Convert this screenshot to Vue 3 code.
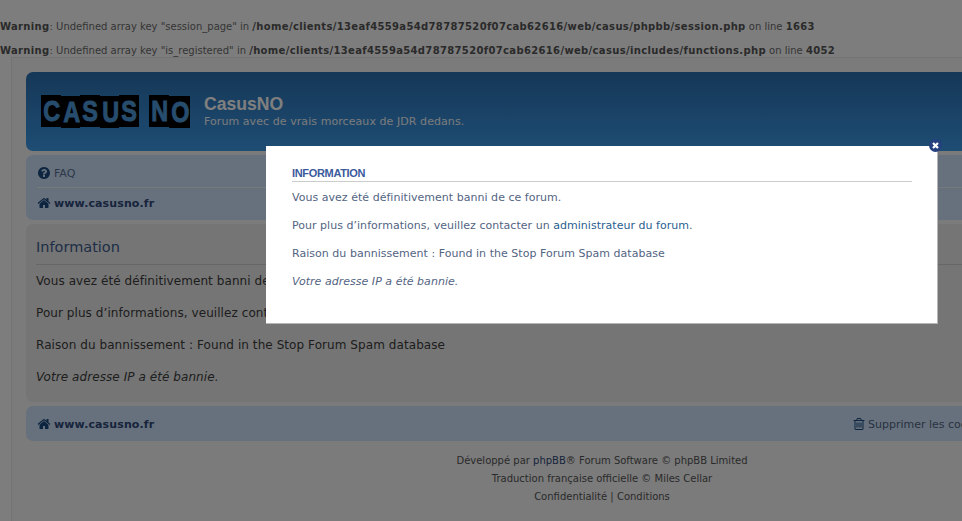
<script setup>
const logoWords = [['C','A','S','U','S'],['N','O']]
const warnings = [
  { key: 'session_page', path: '/home/clients/13eaf4559a54d78787520f07cab62616/web/casus/phpbb/session.php', line: 1663 },
  { key: 'is_registered', path: '/home/clients/13eaf4559a54d78787520f07cab62616/web/casus/includes/functions.php', line: 4052 }
]
const home = 'M1472 992v480q0 26-19 45t-45 19h-384v-384h-256v384h-384q-26 0-45-19t-19-45v-480q0-1 .5-3t.5-3l575-474 575 474q1 2 1 6zm223-69l-62 74q-8 9-21 11h-3q-13 0-21-7l-692-577-692 577q-12 8-24 7-13-2-21-11l-62-74q-8-10-7-23.5t11-21.5l719-599q32-26 76-26t76 26l244 204v-195q0-14 9-23t23-9h192q14 0 23 9t9 23v408l219 182q10 8 11 21.5t-7 23.5z'
const help = 'M1024 1376v-192q0-14-9-23t-23-9h-192q-14 0-23 9t-9 23v192q0 14 9 23t23 9h192q14 0 23-9t9-23zm256-672q0-88-55.5-163t-138.5-116-170-41q-243 0-371 213-15 24 8 42l132 100q7 6 19 6 16 0 25-12 53-68 86-92 34-24 86-24 48 0 85.5 26t37.5 59q0 38-20 61t-68 45q-63 28-115.5 86.5t-52.5 125.5v36q0 14 9 23t23 9h192q14 0 23-9t9-23q0-19 21.5-49.5t54.5-49.5q32-18 49-28.5t46-35 44.5-48 28-60.5 12.5-81zm384 192q0 209-103 385.5t-279.5 279.5-385.5 103-385.5-103-279.5-279.5-103-385.5 103-385.5 279.5-279.5 385.5-103 385.5 103 279.5 279.5 103 385.5z'
const trash = 'M704 736v576q0 14-9 23t-23 9h-64q-14 0-23-9t-9-23v-576q0-14 9-23t23-9h64q14 0 23 9t9 23zm256 0v576q0 14-9 23t-23 9h-64q-14 0-23-9t-9-23v-576q0-14 9-23t23-9h64q14 0 23 9t9 23zm256 0v576q0 14-9 23t-23 9h-64q-14 0-23-9t-9-23v-576q0-14 9-23t23-9h64q14 0 23 9t9 23zm128 724v-948h-896v948q0 22 7 40.5t14.5 27 10.5 8.5h832q3 0 10.5-8.5t14.5-27 7-40.5zm-672-1076h448l-48-117q-7-9-17-11h-317q-10 2-17 11zm928 32v64q0 14-9 23t-23 9h-96v948q0 83-47 143.5t-113 60.5h-832q-66 0-113-58.5t-47-141.5v-952h-96q-14 0-23-9t-9-23v-64q0-14 9-23t23-9h309l70-167q15-37 54-63t79-26h320q40 0 79 26t54 63l70 167h309q14 0 23 9t9 23z'
</script>

<template>
  <div class="page">
    <div class="warnings">
      <p v-for="w in warnings" :key="w.key"><b>Warning</b>: Undefined array key "{{ w.key }}" in <b>{{ w.path }}</b> on line <b>{{ w.line }}</b></p>
    </div>
    <div class="wrap">
      <header class="headerbar">
        <div class="logo">
          <span v-for="(word, i) in logoWords" :key="i" class="logo-word">
            <span v-for="(l, j) in word" :key="j" class="logo-letter"><span class="logo-glyph">{{ l }}</span></span>
          </span>
        </div>
        <div class="site">
          <h1>CasusNO</h1>
          <p>Forum avec de vrais morceaux de JDR dedans.</p>
        </div>
      </header>

      <nav class="navbar">
        <div class="nav-row nav-top">
          <svg class="ico" viewBox="0 0 1792 1792"><path :d="help" /></svg>
          <span>FAQ</span>
        </div>
        <div class="nav-row nav-crumb">
          <svg class="ico" viewBox="0 0 1792 1792"><path :d="home" /></svg>
          <b>www.casusno.fr</b>
        </div>
      </nav>

      <section class="panel">
        <h2>Information</h2>
        <p>Vous avez été définitivement banni de ce forum.</p>
        <p>Pour plus d’informations, veuillez contacter un administrateur du forum.</p>
        <p>Raison du bannissement : Found in the Stop Forum Spam database</p>
        <p><em>Votre adresse IP a été bannie.</em></p>
      </section>

      <nav class="navbar navbar-bottom">
        <div class="nav-row nav-crumb">
          <svg class="ico" viewBox="0 0 1792 1792"><path :d="home" /></svg>
          <b>www.casusno.fr</b>
        </div>
        <div class="nav-row nav-right">
          <svg class="ico" viewBox="0 0 1792 1792"><path :d="trash" /></svg>
          <span>Supprimer les cookies</span>
        </div>
      </nav>

      <footer class="copyright">
        <p>Développé par <span class="lnk">phpBB</span>® Forum Software © phpBB Limited</p>
        <p>Traduction française officielle © Miles Cellar</p>
        <p>Confidentialité | Conditions</p>
      </footer>
    </div>
  </div>

  <div class="overlay"></div>

  <div class="popup">
    <button class="close" type="button" aria-label="Fermer">
      <svg viewBox="0 0 11 11"><path d="M3 3l5 5M8 3L3 8" /></svg>
    </button>
    <h3>INFORMATION</h3>
    <p>Vous avez été définitivement banni de ce forum.</p>
    <p>Pour plus d’informations, veuillez contacter un <span class="lnk-blue">administrateur du forum</span>.</p>
    <p>Raison du bannissement : Found in the Stop Forum Spam database</p>
    <p><em>Votre adresse IP a été bannie.</em></p>
  </div>
</template>

<style>
html, body { margin: 0; height: 100%; overflow: hidden; background: #fbfbfb; }
</style>

<style scoped>
* { box-sizing: border-box; }
p, h1, h2, h3 { margin: 0; font-weight: normal; }
.page {
  width: 1204px;
  font-family: "DejaVu Sans", Verdana, sans-serif;
  font-size: 10px;
  color: #536482;
}
.warnings { padding-top: 21px; color: #6a6a6a; line-height: 12px; display: flex; flex-direction: column; gap: 12px; white-space: nowrap; }
.warnings b { letter-spacing: .34px; color: #555; }
.wrap {
  margin: 0 11px;
  width: 1182px;
  height: 470px;
  padding: 14px 14px 0;
  background: #f6f6f6;
  border: 1px solid #e6e6e6;
}
.headerbar {
  height: 79px;
  border-radius: 7px;
  background: linear-gradient(#2a6faf, #3d9ae8);
  display: flex;
  align-items: flex-start;
  padding: 23px 14px 0 15px;
  color: #fff;
}
.logo { display: flex; gap: 10px; width: 149px; font-family: "Liberation Sans", Arial, sans-serif; }
.logo-word { display: flex; }
.logo-letter { display: block; width: 19.6px; height: 32px; background: #000; overflow: hidden; text-align: center; }
.logo-letter:nth-child(even) { margin-top: 1px; }
.logo-word + .logo-word .logo-letter { width: 20.5px; }
.logo-glyph {
  display: block;
  font-size: 30px;
  line-height: 32px;
  font-weight: 700;
  color: #4f9bdc;
  -webkit-text-stroke: 1px #4f9bdc;
  transform: scaleX(.78);
}
.site { margin-left: 14px; margin-top: -1px; }
.site h1 { font-size: 17.6px; line-height: 20px; font-weight: 700; font-family: "Liberation Sans", Arial, sans-serif; color: #fff; }
.site p { font-size: 11px; line-height: 13px; color: #f2f6fa; margin-top: 1px; letter-spacing: .07px; }
.navbar {
  margin-top: 4px;
  border-radius: 7px;
  background: #cce2fb;
  padding: 3px 11px 2px;
  font-size: 11px;
  color: #304878;
}
.nav-row { display: flex; align-items: center; }
.nav-top { height: 30px; border-bottom: 1px solid #eef2f5; color: #5a7090; padding-top: 1px; }
.nav-crumb { height: 30px; }
.nav-crumb b { letter-spacing: .12px; color: #304878; }
.ico { width: 14px; height: 14px; fill: #1a4a7c; margin-right: 3px; flex: none; }
.panel {
  margin-top: 4px;
  height: 178px;
  background: #eaeaea;
  border-radius: 7px;
  padding: 12px 10px 0;
  font-size: 12px;
  color: #3c3c3c;
  letter-spacing: .07px;
}
.panel h2 { font-size: 14.5px; line-height: 22px; height: 29px; border-bottom: 1px solid #ccc; margin-bottom: 9px; color: #3f5c8f; letter-spacing: 0; }
.panel p { line-height: 15px; margin-bottom: 17px; }
.navbar-bottom {
  height: 35px;
  display: flex;
  justify-content: space-between;
}
.nav-right { width: 315px; }
.nav-right span { color: #536482; white-space: nowrap; }
.nav-right .ico { margin-right: 2px; }
.copyright { padding-top: 11px; text-align: center; line-height: 18px; color: #555; }
.lnk { color: #304878; }
.overlay { position: fixed; inset: 0; background: rgba(0, 0, 0, .5); }
.popup {
  position: fixed;
  left: 266px;
  top: 146px;
  width: 672px;
  height: 178px;
  background: #fff;
  border-right: 1px solid #b5b5b5;
  border-bottom: 1px solid #b5b5b5;
  padding: 20px 25px 0 26px;
  font-family: "DejaVu Sans", Verdana, sans-serif;
  font-size: 11px;
  color: #536482;
  letter-spacing: .03px;
}
.popup h3 {
  font-family: "Liberation Sans", Arial, sans-serif;
  font-size: 11px;
  font-weight: 700;
  line-height: 14px;
  letter-spacing: -.33px;
  color: #3a5a9c;
  border-bottom: 1px solid #ccc;
  padding-bottom: 1px;
  margin-bottom: 9px;
}
.popup p { line-height: 14px; margin-bottom: 14px; }
.lnk-blue { color: #2a6090; }
.close {
  position: absolute;
  right: -5px;
  top: -7px;
  width: 13px;
  height: 13px;
  padding: 1px;
  border: 0;
  border-radius: 50%;
  background: #24407f;
  display: block;
}
.close svg { display: block; width: 11px; height: 11px; fill: none; stroke: #fff; stroke-width: 2.2; }
</style>
